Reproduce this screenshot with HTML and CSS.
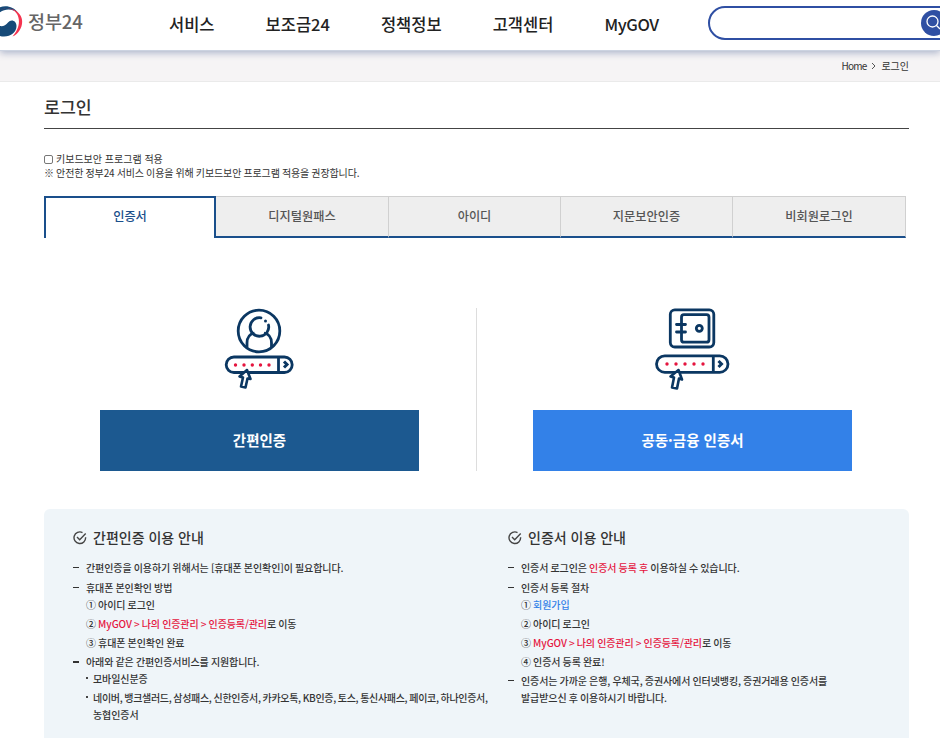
FILE: index.html
```html
<!DOCTYPE html>
<html lang="ko">
<head>
    <meta charset="UTF-8">
    <meta name="viewport" content="width=device-width, initial-scale=1.0">
    <title>로그인 | 정부24</title>
    <link rel="stylesheet" href="styles.css">
</head>
<body>
    <header class="header">
        <a class="logo">
            <svg width="23" height="40" viewBox="0 0 23 40">
                <path d="M-8 14 C-2 4 12 4 18 13 C12 8 2 8 -4 16Z" fill="#164a78"/>
                <path d="M-6 16 C-1 7 12 6 17 14 C21 21 18.500 30 12.500 36.500 C21 33 24.500 22 20.500 15.500 C15 6 0 6 -6 16Z" fill="#f5334f"/>
                <path d="M-4 24 C0 27.500 5 26.500 8 22.500 C11 18.500 16.500 20.500 16.500 26 C16.500 32 11 36.500 4 36.500 C0 36.500 -3 35 -5 32Z" fill="#164a78"/>
            </svg>
            <span>정부24</span>
        </a>
        <nav class="gnb">
            <a>서비스</a>
            <a>보조금24</a>
            <a>정책정보</a>
            <a>고객센터</a>
            <a class="en">MyGOV</a>
        </nav>
        <div class="search">
            <button class="search-btn">
                <svg width="26" height="26" viewBox="0 0 26 26" fill="none" stroke="#fff" stroke-width="1.3">
                    <circle cx="11.500" cy="11.500" r="5.500"/>
                    <path d="M15.500 15.500 L19 19"/>
                </svg>
            </button>
        </div>
    </header>

    <div class="location">
        <span class="home">Home</span>
        <svg width="5" height="8" viewBox="0 0 5 8" fill="none" stroke="#555"><path d="M1 1 L4 4 L1 7"/></svg>
        <span>로그인</span>
    </div>

    <main class="container">
        <h1>로그인</h1>

        <div class="security">
            <label><input type="checkbox"><span>키보드보안 프로그램 적용</span></label>
            <p>※ 안전한 정부24 서비스 이용을 위해 키보드보안 프로그램 적용을 권장합니다.</p>
        </div>

        <ul class="tabs">
            <li class="on">인증서</li>
            <li>디지털원패스</li>
            <li>아이디</li>
            <li>지문보안인증</li>
            <li>비회원로그인</li>
        </ul>

        <div class="methods">
            <div class="method">
                <!-- 간편인증 아이콘 -->
                <svg width="100" height="100" viewBox="0 0 100 100" fill="none" stroke="#0b3762" stroke-width="2.800">
                    <circle cx="49" cy="31" r="20.800"/>
                    <path d="M51 17.800 A9.300 9.300 0 1 0 58.500 25" stroke-linecap="round"/>
                    <circle cx="55.500" cy="21" r="1.500" fill="#0b3762" stroke="none"/>
                    <path d="M37 47.500 V43 Q37 34.500 44.500 33 M54 33 Q61.500 34.500 61.500 43 V47.500"/>
                    <rect x="16.200" y="57" width="66" height="15.500" rx="7.750"/>
                    <path d="M68.500 57 V72"/>
                    <path d="M74 61.500 L77 64.500 L74 67.500" stroke-width="3"/>
                    <g fill="#e5153f" stroke="none">
                        <circle cx="25.500" cy="65" r="1.700"/><circle cx="34" cy="65" r="1.700"/><circle cx="42.300" cy="65" r="1.700"/><circle cx="50.500" cy="65" r="1.700"/><circle cx="59" cy="65" r="1.700"/>
                    </g>
                    <path d="M37 70 L29.500 76.500 L33 77.500 L31 86.500 L35.500 87.500 L37.500 78.500 L40.500 79 Z" fill="#fff" stroke-width="2.600" stroke-linejoin="round"/>
                </svg>
                <button class="btn simple">간편인증</button>
            </div>
            <div class="method">
                <!-- 공동·금융 인증서 아이콘 -->
                <svg width="100" height="100" viewBox="0 0 100 100" fill="none" stroke="#0b3762" stroke-width="2.800">
                    <rect x="30.300" y="9.800" width="43.500" height="37.200" rx="4.500"/>
                    <rect x="41.500" y="14.700" width="27.500" height="27.500" rx="2.500"/>
                    <path d="M36.500 24.500 H45.500 M36.500 32 H45.500" stroke-linecap="round"/>
                    <circle cx="59.300" cy="28.300" r="3"/>
                    <rect x="16.500" y="55.800" width="71.500" height="16.500" rx="8.250"/>
                    <path d="M73.300 56 V72"/>
                    <path d="M78.500 61 L81.500 64 L78.500 67" stroke-width="3"/>
                    <g fill="#e5153f" stroke="none">
                        <circle cx="27" cy="64" r="1.700"/><circle cx="36" cy="64" r="1.700"/><circle cx="45" cy="64" r="1.700"/><circle cx="54" cy="64" r="1.700"/><circle cx="63" cy="64" r="1.700"/>
                    </g>
                    <path d="M38.500 70 L30.500 76.500 L34 77.500 L32 87.500 L37 88.500 L39 78.500 L42 79.500 Z" fill="#fff" stroke-width="2.600" stroke-linejoin="round"/>
                </svg>
                <button class="btn joint">공동·금융 인증서</button>
            </div>
        </div>

        <div class="guide">
            <section>
                <h2>
                    <svg width="14" height="14" viewBox="0 0 14 14" fill="none" stroke="#444" stroke-width="1.400"><path d="M9.500 1.600 A5.800 5.800 0 1 0 12.600 6.300 M4 6 L6.700 8.700 L12.700 2.600"/></svg>
                    간편인증 이용 안내
                </h2>
                <ul class="dash">
                    <li>간편인증을 이용하기 위해서는 [휴대폰 본인확인]이 필요합니다.</li>
                    <li>휴대폰 본인확인 방법
                        <ul class="steps">
                            <li>① 아이디 로그인</li>
                            <li>② <em>MyGOV &gt; 나의 인증관리 &gt; 인증등록/관리</em>로 이동</li>
                            <li>③ 휴대폰 본인확인 완료</li>
                        </ul>
                    </li>
                    <li class="bold">아래와 같은 간편인증서비스를 지원합니다.
                        <ul class="dots">
                            <li>모바일신분증</li>
                            <li><span class="tight">네이버, 뱅크샐러드, 삼성패스, 신한인증서, 카카오톡, KB인증, 토스, 통신사패스, 페이코, 하나인증서,</span><br>농협인증서</li>
                        </ul>
                    </li>
                </ul>
            </section>
            <section>
                <h2>
                    <svg width="14" height="14" viewBox="0 0 14 14" fill="none" stroke="#444" stroke-width="1.400"><path d="M9.500 1.600 A5.800 5.800 0 1 0 12.600 6.300 M4 6 L6.700 8.700 L12.700 2.600"/></svg>
                    인증서 이용 안내
                </h2>
                <ul class="dash">
                    <li>인증서 로그인은 <em>인증서 등록 후</em> 이용하실 수 있습니다.</li>
                    <li>인증서 등록 절차
                        <ul class="steps">
                            <li>① <a class="join">회원가입</a></li>
                            <li>② 아이디 로그인</li>
                            <li>③ <em>MyGOV &gt; 나의 인증관리 &gt; 인증등록/관리</em>로 이동</li>
                            <li>④ 인증서 등록 완료!</li>
                        </ul>
                    </li>
                    <li>인증서는 가까운 은행, 우체국, 증권사에서 인터넷뱅킹, 증권거래용 인증서를<br>발급받으신 후 이용하시기 바랍니다.</li>
                </ul>
            </section>
        </div>
    </main>
</body>
</html>
```

FILE: styles.css
```css
* {
    box-sizing: border-box;
}
body {
    margin: 0;
    height: 738px;
    overflow: hidden;
    background: #fff;
    color: #333;
    font-family: "Noto Sans CJK KR", sans-serif;
    font-size: 10px;
    line-height: 17px;
}
h1, h2, ul, p {
    margin: 0;
    padding: 0;
    font-weight: 500;
}
ul {
    list-style: none;
}
em {
    font-style: normal;
    color: #e5153f;
}

/* 상단 */
.header {
    position: relative;
    display: flex;
    height: 51px;
    background: #fff;
    border-bottom: 1px solid #ccd3e1;
    box-shadow: 0 2px 7px rgba(60, 85, 140, 0.4);
}
.logo {
    display: flex;
    flex: none;
    width: 169px;
    color: #666;
    font-size: 18.5px;
    font-weight: 500;
    line-height: 43px;
    letter-spacing: -0.1px;
}
.logo svg {
    margin-right: 5px;
}
.gnb {
    display: flex;
    flex: none;
    gap: 51px;
    width: 539px;
    color: #222;
    font-size: 16.5px;
    font-weight: 500;
    line-height: 49px;
    white-space: nowrap;
}
.gnb .en {
    letter-spacing: -0.4px;
}
.search {
    flex: none;
    width: 250px;
    height: 34px;
    margin-top: 6px;
    padding: 2px 0 0 211px;
    border: 2px solid #2f4fa3;
    border-radius: 17px;
}
.search-btn {
    width: 26px;
    height: 26px;
    padding: 0;
    border: 0;
    border-radius: 50%;
    background: #2f4fa3;
}
.location {
    display: flex;
    justify-content: flex-end;
    align-items: center;
    gap: 5px;
    height: 31px;
    padding: 0 31px 2px 0;
    background: #f6f4f5;
    border-bottom: 1px solid #eaeaea;
}
.location svg {
    margin-top: 2px;
}
.home {
    letter-spacing: -0.8px;
}

.container {
    width: 865px;
    margin-left: 44px;
}
h1 {
    height: 47px;
    border-bottom: 1px solid #444;
    font-size: 17.3px;
    line-height: 49px;
}
.security {
    padding-top: 23px;
    line-height: 14px;
}
.security label {
    display: flex;
    align-items: center;
    gap: 3px;
    height: 14px;
}
.security input {
    appearance: none;
    width: 9px;
    height: 9px;
    margin: 0;
    border: 1px solid #777;
    border-radius: 2px;
    background: #fff;
}
.security p {
    font-weight: 400;
    letter-spacing: -0.12px;
    word-spacing: -0.5px;
}

/* 탭 */
.tabs {
    display: grid;
    grid-template-columns: 172px 173px 172px 172px 173px;
    width: 862px;
    height: 42px;
    margin-top: 16px;
}
.tabs li {
    border: 1px solid #d0d0d0;
    border-left: 0;
    border-bottom: 2px solid #1a4f8b;
    background: #eee;
    color: #555;
    font-size: 12.2px;
    font-weight: 500;
    line-height: 39px;
    text-align: center;
}
.tabs .on {
    border: 2px solid #1a4f8b;
    border-bottom: 0;
    background: #fff;
    color: #1a4f8b;
    line-height: 37px;
}

.methods {
    display: grid;
    grid-template-columns: 433px 432px;
    height: 163px;
    margin-top: 70px;
}
.method {
    display: flex;
    flex-direction: column;
    padding-left: 56px;
}
.method:first-child {
    border-right: 1px solid #ddd;
}
.method svg {
    margin: -8px 0 10px 110px;
}
.method + .method svg {
    margin-left: 107px;
}
.btn {
    width: 319px;
    height: 61px;
    padding: 0 0 3px;
    border: 0;
    color: #fff;
    font-family: inherit;
    font-size: 14.5px;
    font-weight: 700;
}
.simple {
    background: #1c5990;
}
.joint {
    background: #3381e8;
}

/* 이용 안내 */
.guide {
    display: grid;
    grid-template-columns: 435px 400px;
    height: 240px;
    margin-top: 38px;
    padding: 19px 0 0 29px;
    border-radius: 6px;
    background: #eff5f9;
    letter-spacing: -0.1px;
    word-spacing: -0.5px;
    white-space: nowrap;
}
.guide h2 {
    display: flex;
    align-items: center;
    gap: 6px;
    height: 19px;
    font-size: 14px;
    letter-spacing: 0;
    word-spacing: 0;
}
.dash {
    margin-top: 12px;
}
.dash > li {
    padding-left: 13px;
    margin-bottom: 2px;
}
.dash > li:first-child {
    margin-bottom: 3px;
}
.dash > li::before {
    content: "";
    float: left;
    width: 6px;
    height: 1px;
    margin: 8px 0 0 -13px;
    background: #333;
}
.dash > .bold::before {
    height: 2px;
}
.steps li + li, .dots li + li {
    margin-top: 2px;
}
.dots li {
    padding-left: 7px;
}
.dots li::before {
    content: "";
    float: left;
    width: 2px;
    height: 2px;
    margin: 7px 0 0 -7px;
    background: #444;
}
.tight {
    letter-spacing: -0.32px;
}
.join {
    color: #3381e8;
}
```
